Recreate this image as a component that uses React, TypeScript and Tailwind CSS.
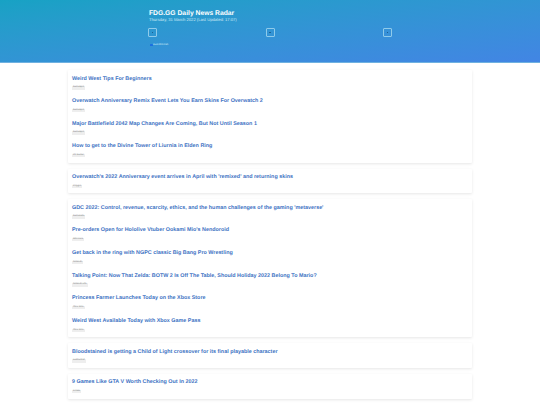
const groups: [string, string][][] = [
  [
    ["Weird West Tips For Beginners", "GameSpot"],
    ["Overwatch Anniversary Remix Event Lets You Earn Skins For Overwatch 2", "GameSpot"],
    ["Major Battlefield 2042 Map Changes Are Coming, But Not Until Season 1", "GameSpot"],
    ["How to get to the Divine Tower of Liurnia in Elden Ring", "PC Gamer"],
  ],
  [["Overwatch's 2022 Anniversary event arrives in April with 'remixed' and returning skins", "Polygon"]],
  [
    ["GDC 2022: Control, revenue, scarcity, ethics, and the human challenges of the gaming 'metaverse'", "Gamasutra"],
    ["Pre-orders Open for Hololive Vtuber Ookami Mio's Nendoroid", "Siliconera"],
    ["Get back in the ring with NGPC classic Big Bang Pro Wrestling", "Nintendo"],
    ["Talking Point: Now That Zelda: BOTW 2 Is Off The Table, Should Holiday 2022 Belong To Mario?", "Nintendo Life"],
    ["Princess Farmer Launches Today on the Xbox Store", "Xbox Wire"],
    ["Weird West Available Today with Xbox Game Pass", "Xbox Wire"],
  ],
  [["Bloodstained is getting a Child of Light crossover for its final playable character", "Destructoid"]],
  [["9 Games Like GTA V Worth Checking Out In 2022", "Kotaku"]],
];

function Box() {
  return (
    <div className="flex h-[9px] w-[9px] items-center justify-center rounded-[1px] border border-[#8fcbea]">
      <div className="h-[1.5px] w-[1.5px] bg-[#1c5f8f]" />
    </div>
  );
}

export default function App() {
  return (
    <div className="h-[405px] overflow-hidden bg-white font-['Liberation_Sans',sans-serif] [text-rendering:geometricPrecision]">
      <header className="h-[63px] border-b border-[#6fb1e0] bg-gradient-to-br from-[#17a2c4] to-[#4285e4] px-[148px] pt-[10px]">
        <h1 className="pl-[1px] text-[6.75px] font-bold leading-[8px] text-white">FDG.GG Daily News Radar</h1>
        <p className="pl-[1px] text-[4.13px] leading-[4px] text-[#cfeaf6]">Thursday, 31 March 2022 (Last Updated: 17:07)</p>
        <div className="mt-[6px] flex justify-between">
          <Box />
          <Box />
          <Box />
        </div>
        <label className="mt-[6px] flex items-center gap-[0.5px] pl-[2px]">
          <span className="h-[2.5px] w-[2.5px] rounded-[0.5px] bg-[#1c6fe0]" />
          <span className="text-[2.6px] leading-[4px] text-[#dff1fa]">Auto Refresh</span>
        </label>
      </header>
      <main className="mx-auto mt-[7px] flex w-[404px] flex-col gap-[6px]">
        {groups.map((g, i) => (
          <section key={i} className="rounded-[1px] bg-white px-[4px] pb-[1px] pt-[1px] shadow-[0_1px_3px_rgba(0,0,0,0.10)]">
            {g.map(([title, src], j) => (
              <article key={j} className="flex h-[22.67px] flex-col pt-[3.5px]">
                <h2 className="text-[5.4px] font-bold leading-[8px] text-[#3f74c4]">{title}</h2>
                <span className="mt-[3.5px] w-fit rounded-[0.5px] bg-[#eeeeee] px-[1px] text-[2.3px] leading-[3.5px] text-[#777]">{src}</span>
              </article>
            ))}
          </section>
        ))}
      </main>
    </div>
  );
}
